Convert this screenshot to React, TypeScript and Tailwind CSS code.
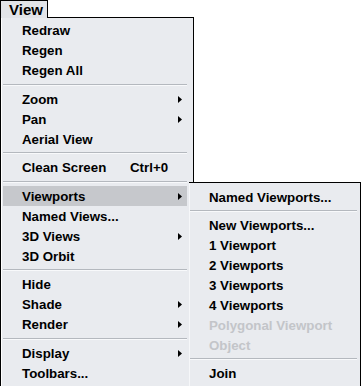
import React from 'react';

type Item = { label: string; sub?: boolean; shortcut?: string; active?: boolean; disabled?: boolean };
type Entry = Item | 'sep8' | 'sep9';

const mainItems: Entry[] = [
  { label: 'Redraw' },
  { label: 'Regen' },
  { label: 'Regen All' },
  'sep9',
  { label: 'Zoom', sub: true },
  { label: 'Pan', sub: true },
  { label: 'Aerial View' },
  'sep8',
  { label: 'Clean Screen', shortcut: 'Ctrl+0' },
  'sep9',
  { label: 'Viewports', sub: true, active: true },
  { label: 'Named Views...' },
  { label: '3D Views', sub: true },
  { label: '3D Orbit' },
  'sep8',
  { label: 'Hide' },
  { label: 'Shade', sub: true },
  { label: 'Render', sub: true },
  'sep9',
  { label: 'Display', sub: true },
  { label: 'Toolbars...' },
];

const subItems: Entry[] = [
  { label: 'Named Viewports...' },
  'sep8',
  { label: 'New Viewports...' },
  { label: '1 Viewport' },
  { label: '2 Viewports' },
  { label: '3 Viewports' },
  { label: '4 Viewports' },
  { label: 'Polygonal Viewport', disabled: true },
  { label: 'Object', disabled: true },
  'sep8',
  { label: 'Join' },
];

const Arrow = () => (
  <svg width="4" height="7" viewBox="0 0 4 7" className="block -mt-[1px]">
    <path d="M0 0 L4 3.5 L0 7 Z" fill="#000" />
  </svg>
);

const Separator = ({ h }: { h: 'sep8' | 'sep9' }) => (
  <div className={h === 'sep9' ? 'h-[9px] flex flex-col justify-center' : 'h-[8px] flex flex-col justify-center'}>
    <div className="h-[1px] bg-[#b4b8be]" />
    <div className="h-[1px] bg-[#f8f9fb]" />
  </div>
);

const Row = ({ item }: { item: Item }) => (
  <div
    className={`h-[20px] flex items-center pt-[2px] pl-[19px] pr-[5px] ${item.active ? 'bg-[#c6c8cc]' : ''} ${
      item.disabled ? 'text-[#c3c5c9]' : 'text-black'
    }`}
  >
    <span className={item.shortcut ? 'w-[108px] leading-none' : 'flex-1 leading-none'}>{item.label}</span>
    {item.shortcut && <span className="flex-1 leading-none">{item.shortcut}</span>}
    {item.sub && <Arrow />}
  </div>
);

const App: React.FC = () => {
  return (
    <div
      className="relative w-[361px] h-[386px] bg-white overflow-hidden font-bold text-[13.3px]"
      style={{ fontFamily: '"Liberation Sans", Arial, sans-serif' }}
    >
      {/* menu bar tab */}
      <div className="flex h-[18px]">
        <div className="w-[48px] border-l border-t border-r border-black bg-[#e2e4e8] pl-[8px] flex items-center text-[15px] leading-none">
          View
        </div>
        <div className="w-[146px] border-b border-black" />
      </div>

      {/* main dropdown */}
      <div className="w-[194px] h-[368px] border-l border-r border-black bg-[#e9ebef] flex">
        <div className="w-[1px] bg-white" />
        <div className="flex flex-col pt-[2px] ml-[1px] w-[184px]">
          {mainItems.map((e, i) =>
            typeof e === 'string' ? <Separator key={i} h={e} /> : <Row key={i} item={e} />
          )}
        </div>
      </div>

      {/* viewports submenu */}
      <div className="absolute left-[189px] top-[182px] w-[172px] h-[204px] border-t border-r border-black bg-[#e9ebef] flex">
        <div className="w-[1px] bg-[#f6f7f9]" />
        <div className="flex flex-col pt-[4px] w-[167px]">
          {subItems.map((e, i) =>
            typeof e === 'string' ? <Separator key={i} h={e} /> : <Row key={i} item={e} />
          )}
        </div>
      </div>
    </div>
  );
};

export default App;
